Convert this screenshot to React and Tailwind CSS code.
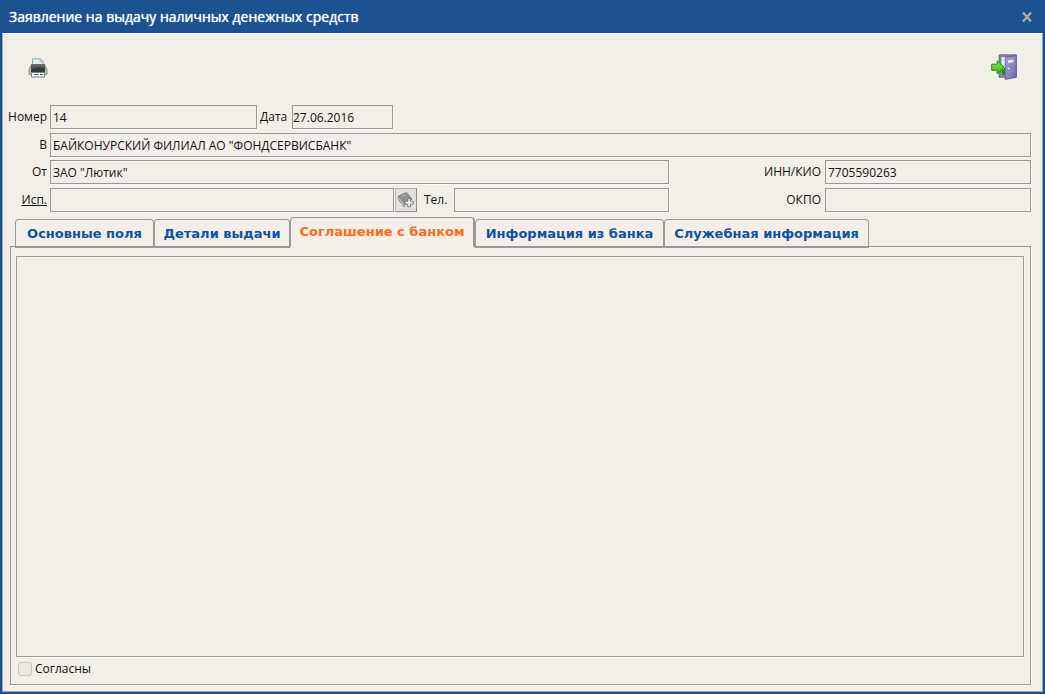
import { useState } from "react";

const tabs = [
  { id: "main", label: "Основные поля", width: "w-[139px]" },
  { id: "details", label: "Детали выдачи", width: "w-[136px]" },
  { id: "agreement", label: "Соглашение с банком", width: "w-[185px]" },
  { id: "bank", label: "Информация из банка", width: "w-[189px]" },
  { id: "service", label: "Служебная информация", width: "w-[205px]" },
];

function PrinterIcon() {
  return (
    <svg viewBox="0 0 20 20" className="size-5" aria-hidden="true">
      <path d="M3.500 6.500h13l2.500 5v5H1v-5z" fill="#b9bcbc" stroke="#7f8584" strokeWidth="0.8" />
      <path d="M4.500 8V0.800h8l2.500 2.700V8z" fill="#e1eef0" stroke="#8fa3a5" strokeWidth="0.9" />
      <path d="M12.200 0.800v3h2.900z" fill="#fff" stroke="#8fa3a5" strokeWidth="0.7" />
      <rect x="3" y="6" width="14" height="2.500" fill="#6b6b6b" />
      <rect x="3" y="8" width="14" height="6.500" fill="#393939" />
      <path d="M3 11.500c5-2.500 9-2.500 14-1.500V8H3z" fill="#5b5759" />
      <rect x="17.200" y="10.500" width="1.300" height="1.500" fill="#5fd35f" />
      <path d="M4 14.500h12l0.800 4.500H3.200z" fill="#fff" stroke="#6f7677" strokeWidth="0.9" />
      <path d="M6 16.500h5" stroke="#2f86c8" strokeWidth="1.200" />
      <path d="M12 16.500h2.500" stroke="#31475a" strokeWidth="1.200" />
    </svg>
  );
}

function ExitIcon() {
  return (
    <svg viewBox="0 0 26 26" className="size-[26px]" aria-hidden="true">
      <defs>
        <linearGradient id="door" x1="0" y1="0" x2="1" y2="1">
          <stop offset="0" stopColor="#a9a7dc" />
          <stop offset="1" stopColor="#6c69a8" />
        </linearGradient>
        <linearGradient id="arrow" x1="0" y1="0" x2="0" y2="1">
          <stop offset="0" stopColor="#8bf04a" />
          <stop offset="1" stopColor="#35b512" />
        </linearGradient>
      </defs>
      <path d="M8 1.500Q8 0.700 9 0.700H25.300V23.300H8z" fill="#83838c" stroke="#62626e" strokeWidth="0.7" />
      <path d="M10.500 3H16V21.500H10.500z" fill="#d3effa" />
      <path d="M10.500 16l4-2.500v8h-4z" fill="#288a20" />
      <path d="M14.200 3.300L25.300 1.500V23.300L14.200 25.500z" fill="url(#door)" stroke="#56538e" strokeWidth="0.7" />
      <path d="M17 6.200l5.500-0.700v2.800l-5.500 0.700z" fill="#ecebfb" />
      <path d="M17 17.500l5.500-0.600" stroke="#9896cf" strokeWidth="1" />
      <circle cx="17.600" cy="14.500" r="1.300" fill="#f4f4fa" stroke="#57558c" strokeWidth="0.4" />
      <path d="M0.700 10.200h5.500V6.800L13 13.200 6.200 20v-3.700H0.700z" fill="url(#arrow)" stroke="#27890e" strokeWidth="1" strokeLinejoin="round" />
    </svg>
  );
}

function BookAddIcon() {
  return (
    <svg viewBox="0 0 18 18" className="size-[18px]" aria-hidden="true">
      <path d="M1.500 5L9.500 1.500 15 8 7.500 14.500 3 11z" fill="#8f8f8f" stroke="#777" strokeWidth="0.8" strokeLinejoin="round" />
      <path d="M1.500 5l-0.300 2.500L7 16.200l1-1.700z" fill="#d2d2d0" stroke="#858585" strokeWidth="0.8" strokeLinejoin="round" />
      <path d="M4.500 5.500l5-2" stroke="#bcbcbc" strokeWidth="1" />
      <path d="M10.700 7.700h2.800v2.600h2.800v2.800h-2.800v2.700h-2.800v-2.700H8v-2.800h2.700z" fill="#ecebe8" stroke="#787878" strokeWidth="0.9" />
    </svg>
  );
}

function Field({ id, label, value = "", labelClass = "", inputClass = "px-0.5" }) {
  return (
    <>
      <label htmlFor={id} className={`shrink-0 whitespace-nowrap ${labelClass}`}>
        {label}
      </label>
      <input
        id={id}
        type="text"
        readOnly
        defaultValue={value}
        className={`h-6 min-w-0 border border-[#999] shadow-[1px_1px_0_#fbfaf8] outline-none ${inputClass}`}
      />
    </>
  );
}

function App() {
  const [activeTab, setActiveTab] = useState("agreement");

  return (
    <div className="flex min-h-screen flex-col bg-[#1d5292] px-0.5 pb-0.5 font-['Open_Sans',sans-serif] text-xs text-[#111]">
      <header className="flex h-[33px] shrink-0 items-center justify-between pr-2 pl-[7px]">
        <h1 className="text-sm font-medium text-white text-shadow-[0_0_1px_#fff]">
          Заявление на выдачу наличных денежных средств
        </h1>
        <button type="button" aria-label="Закрыть" className="flex size-4 items-center justify-center">
          <svg viewBox="0 0 12 12" className="size-3" aria-hidden="true">
            <path d="M2 1.500l8 9M10 1.500l-8 9" stroke="#aaa9a4" strokeWidth="2.400" />
          </svg>
        </button>
      </header>

      <main className="flex grow flex-col border border-[#a3a79b] border-t-white bg-[#f2efe8] pt-5 pr-[11px] pb-1.5 pl-[7px]">
        <div className="flex h-[51px] shrink-0 items-start justify-between pr-3.5 pl-[18px]">
          <button type="button" aria-label="Печать" className="mt-1">
            <PrinterIcon />
          </button>
          <button type="button" aria-label="Выход">
            <ExitIcon />
          </button>
        </div>

        <form className="flex flex-col gap-[3px]">
          <div className="flex flex-col gap-1">
            <div className="flex items-center gap-[3px]">
              <Field id="number" label="Номер" value="14" labelClass="flex w-[37px] justify-end" inputClass="w-[207px] px-0.5" />
              <Field id="date" label="Дата" value="27.06.2016" labelClass="w-[29px]" inputClass="w-[101px]" />
            </div>
            <div className="flex items-center gap-[3px]">
              <Field
                id="bank"
                label="В"
                value={'БАЙКОНУРСКИЙ ФИЛИАЛ АО "ФОНДСЕРВИСБАНК"'}
                labelClass="w-[37px] text-right"
                inputClass="grow px-0.5"
              />
            </div>
          </div>
          <div className="flex flex-col gap-1">
            <div className="flex items-center gap-[3px]">
              <Field id="payer" label="От" value={'ЗАО "Лютик"'} labelClass="w-[37px] text-right" inputClass="grow px-0.5" />
              <Field id="inn" label="ИНН/КИО" value="7705590263" labelClass="w-[150px] pr-px text-right" inputClass="w-[206px] px-0.5" />
            </div>
            <div className="flex items-center gap-[3px]">
              <Field id="executor" label="Исп." labelClass="w-[37px] text-right underline" inputClass="grow px-0.5" />
              <button
                type="button"
                aria-label="Выбрать исполнителя"
                className="-ml-0.5 flex h-6 w-[22px] shrink-0 items-center justify-center border border-[#b5b5b2] border-r-[#8f8f8f] border-b-[#8f8f8f] bg-[#e3e1dc]"
              >
                <BookAddIcon />
              </button>
              <Field id="phone" label="Тел." labelClass="w-[31px] pl-1" inputClass="w-[215px] px-0.5" />
              <Field id="okpo" label="ОКПО" labelClass="w-[150px] pr-px text-right" inputClass="w-[206px] px-0.5" />
            </div>
          </div>
        </form>

        <div role="tablist" className="mt-[5px] -mb-0.5 flex shrink-0 items-end pl-[5px]">
          {tabs.map((tab) => (
            <button
              key={tab.id}
              type="button"
              role="tab"
              aria-selected={tab.id === activeTab}
              onClick={() => setActiveTab(tab.id)}
              className={`rounded-t border border-[#999] font-['DejaVu_Sans',sans-serif] text-[13px] font-bold whitespace-nowrap ${tab.width} ${
                tab.id === activeTab
                  ? "relative h-[31px] border-r-2 border-b-2 border-b-[#f2efe8] bg-[#f2efe8] text-[#ff6a1a]"
                  : "h-[29px] border-b-2 pt-0.5 text-[#1150a8]"
              }`}
            >
              {tab.label}
            </button>
          ))}
        </div>

        <section role="tabpanel" className="flex grow flex-col border border-[#999] pt-[9px] pr-1.5 pb-[7px] pl-[5px] shadow-[1px_1px_0_#fbfaf8]">
          <textarea
            readOnly
            aria-label="Соглашение с банком"
            className="min-h-40 w-full grow resize-none border border-[#999] shadow-[1px_1px_0_#fbfaf8] outline-none"
          />
          <label className="flex h-5 shrink-0 items-center gap-[3px] pt-1 pl-0.5">
            <input
              type="checkbox"
              disabled
              className="size-3.5 appearance-none rounded-[3px] border border-[#cbc9c4] bg-[#ebe8e2]"
            />
            Согласны
          </label>
        </section>
      </main>
    </div>
  );
}

export default App;
